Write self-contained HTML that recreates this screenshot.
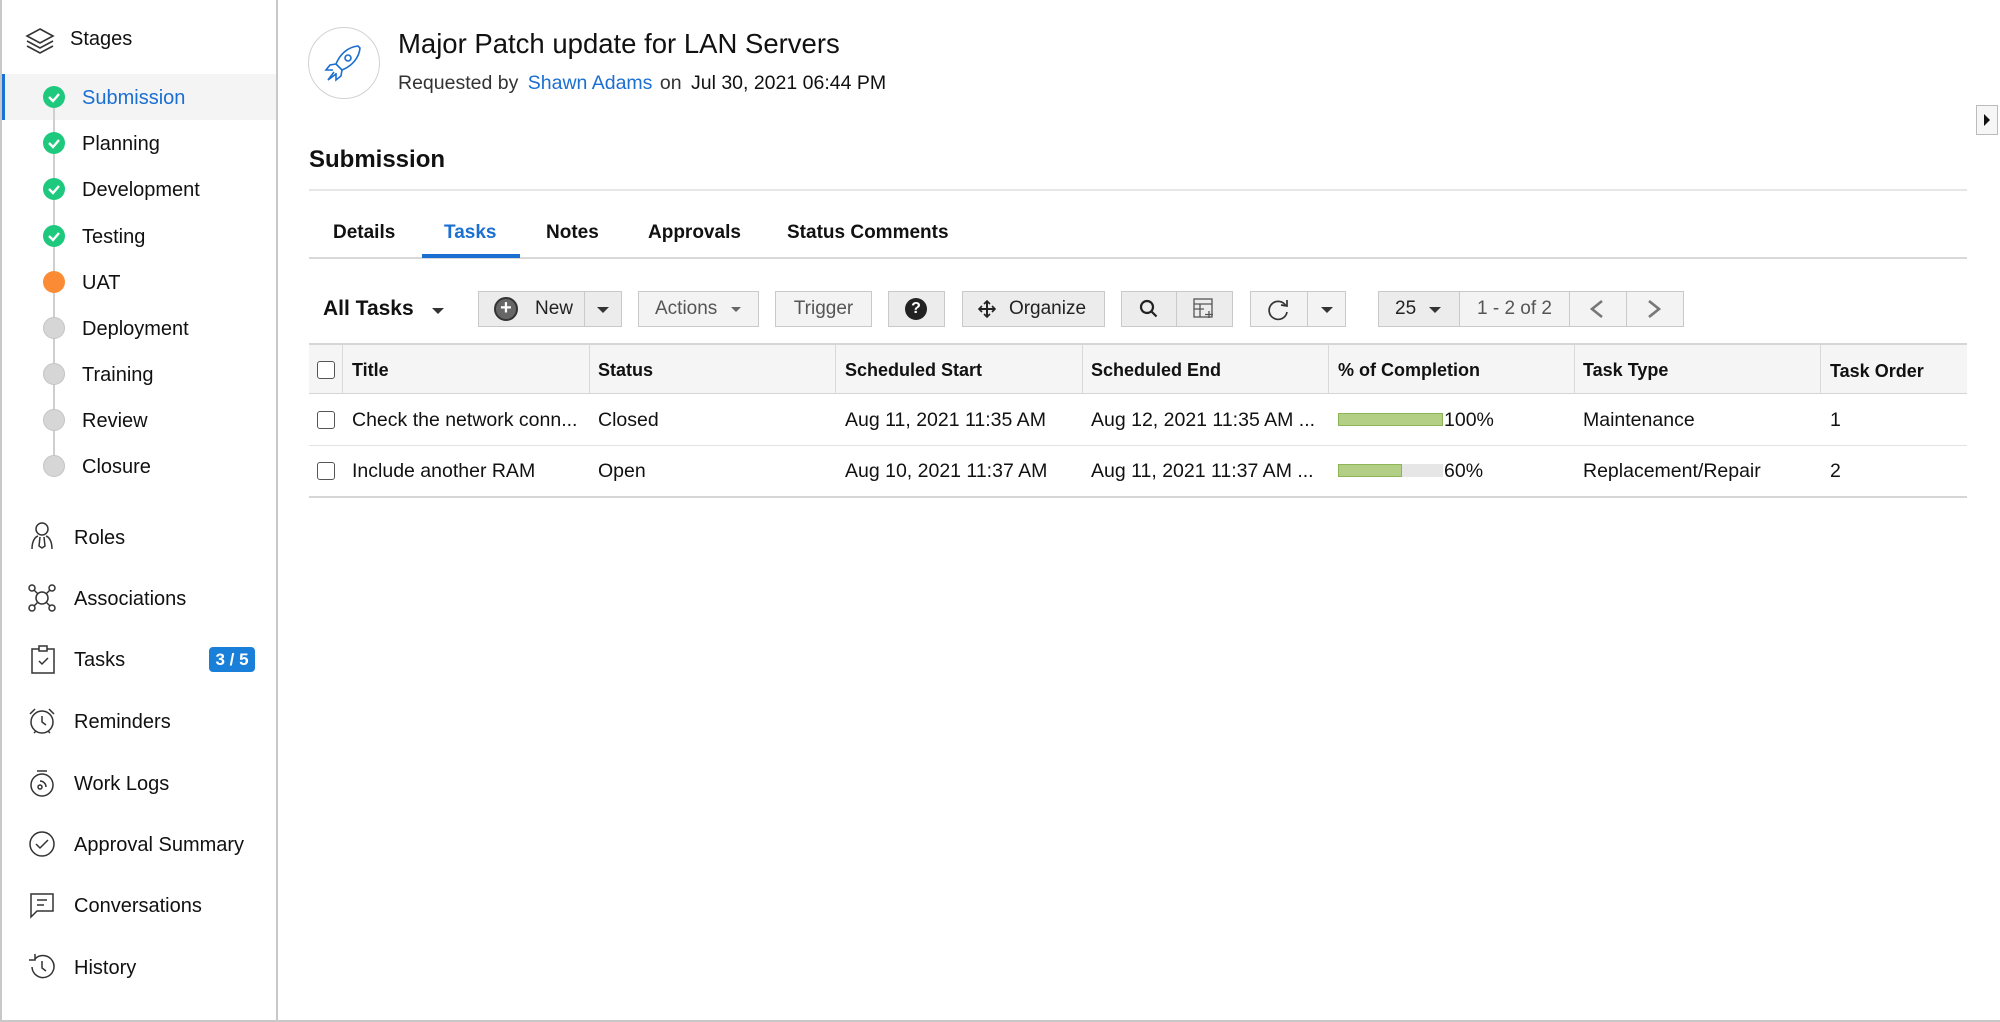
<!DOCTYPE html>
<html><head><meta charset="utf-8"><style>
*{box-sizing:border-box;margin:0;padding:0}
body{width:2000px;height:1022px;background:#fff;font-family:"Liberation Sans",Arial,sans-serif;color:#111;position:relative;overflow:hidden}
.a{position:absolute;white-space:nowrap}
.frame{position:absolute;left:0;top:0;width:2000px;height:1022px;border:2px solid #c8c8c8;border-top:none;border-right:none}
.side{position:absolute;left:0;top:0;width:278px;height:1022px;border-right:2px solid #c8c8c8}
.st{position:absolute;left:82px;font-size:20px;line-height:24px}
.dot{position:absolute;left:43px;width:22px;height:22px;border-radius:50%}
.g{background:#1ec97e}.o{background:#fb8b34}.n{background:#d6d6d6;border:1px solid #c4c4c4}
.mi{position:absolute;left:74px;font-size:20px;line-height:24px}
.tab{position:absolute;top:221px;font-size:19px;font-weight:bold;line-height:24px}
.btn{position:absolute;top:291px;height:36px;border:1px solid #c9c9c9;background:#f3f3f3;font-size:19px;line-height:34px;color:#333;text-align:center}
.th{position:absolute;top:343px;height:51px;background:#f5f5f5;border-top:2px solid #d6d6d6;border-bottom:1px solid #d6d6d6}
.hc{position:absolute;top:360px;font-size:18px;font-weight:bold}
.vl{position:absolute;top:345px;width:1px;height:49px;background:#d9d9d9}
.c{position:absolute;font-size:19.5px}
.cb{position:absolute;left:317px;width:18px;height:18px;border:1.5px solid #555;border-radius:3px;background:#fff}
.bar{position:absolute;left:1338px;width:105px;height:13px;background:#e6e6e6}
.bar i{position:absolute;left:0;top:0;height:13px;background:#b3cf86;border:1px solid #8db556}
</style></head><body>
<div class="side"></div>
<div class="frame"></div>
<svg class="a" style="left:24px;top:26px" width="32" height="28" viewBox="0 0 32 28" fill="none" stroke="#333" stroke-width="1.6"><path d="M16 3 L29 10 L16 17 L3 10 Z"/><path d="M3 15 L16 22 L29 15"/><path d="M3 20 L16 27 L29 20"/></svg>
<div class="a" style="left:70px;top:28px;font-size:20px">Stages</div>
<div class="a" style="left:2px;top:74px;width:274px;height:46px;background:#f4f4f4;border-left:3px solid #1a73d9"></div>
<div class="a" style="left:53px;top:100px;width:2px;height:366px;background:#cfcfcf"></div>
<div class="dot g" style="top:86px"></div><div class="dot g" style="top:132px"></div><div class="dot g" style="top:178px"></div><div class="dot g" style="top:225px"></div>
<div class="dot o" style="top:271px"></div><div class="dot n" style="top:317px"></div><div class="dot n" style="top:363px"></div><div class="dot n" style="top:409px"></div><div class="dot n" style="top:455px"></div>
<svg class="a" style="left:43px;top:86px" width="22" height="200"><g fill="none" stroke="#fff" stroke-width="2.4"><path d="M6 11l4 4 6-7"/><path d="M6 57l4 4 6-7"/><path d="M6 103l4 4 6-7"/><path d="M6 150l4 4 6-7"/></g></svg>
<div class="st" style="top:86px;color:#1a6fd1">Submission</div>
<div class="st" style="top:132px">Planning</div>
<div class="st" style="top:178px">Development</div>
<div class="st" style="top:225px">Testing</div>
<div class="st" style="top:271px">UAT</div>
<div class="st" style="top:317px">Deployment</div>
<div class="st" style="top:363px">Training</div>
<div class="st" style="top:409px">Review</div>
<div class="st" style="top:455px">Closure</div>
<svg class="a" style="left:28px;top:521px" width="28" height="30" fill="none" stroke="#333" stroke-width="1.5"><circle cx="14" cy="8" r="6"/><path d="M4 28c0-8 3-12 6-13M24 28c0-8-3-12-6-13M12 16l-1 9 3 2 3-2-1-9"/></svg>
<div class="mi" style="top:526px">Roles</div>
<svg class="a" style="left:28px;top:584px" width="28" height="28" fill="none" stroke="#333" stroke-width="1.5"><circle cx="4" cy="4" r="3"/><circle cx="24" cy="4" r="3"/><circle cx="4" cy="24" r="3"/><circle cx="24" cy="24" r="3"/><circle cx="14" cy="14" r="6"/><path d="M6 6l4 4M22 6l-4 4M6 22l4-4M22 22l-4-4"/></svg>
<div class="mi" style="top:587px">Associations</div>
<svg class="a" style="left:30px;top:645px" width="26" height="30" fill="none" stroke="#333" stroke-width="1.5"><rect x="2" y="4" width="22" height="24"/><rect x="9" y="1" width="8" height="5" fill="#fff"/><path d="M9 16l3 3 6-6"/></svg>
<div class="mi" style="top:648px">Tasks</div>
<div class="a" style="left:209px;top:647px;width:46px;height:25px;background:#1a7fd8;border-radius:4px;color:#fff;font-weight:bold;font-size:17px;text-align:center;line-height:25px">3 / 5</div>
<svg class="a" style="left:28px;top:707px" width="28" height="28" fill="none" stroke="#333" stroke-width="1.5"><circle cx="14" cy="15" r="11"/><path d="M14 9v6l4 3M2 7l5-5M26 7l-5-5M6 26l2-2M22 26l-2-2"/></svg>
<div class="mi" style="top:710px">Reminders</div>
<svg class="a" style="left:28px;top:769px" width="28" height="28" fill="none" stroke="#333" stroke-width="1.5"><circle cx="14" cy="16" r="11"/><path d="M9 2h10"/><circle cx="12" cy="18" r="2"/><path d="M12 12a6 6 0 0 1 6 6"/></svg>
<div class="mi" style="top:772px">Work Logs</div>
<svg class="a" style="left:28px;top:830px" width="28" height="28" fill="none" stroke="#333" stroke-width="1.5"><circle cx="14" cy="14" r="12"/><path d="M8 14l4 4 8-8"/></svg>
<div class="mi" style="top:833px">Approval Summary</div>
<svg class="a" style="left:28px;top:891px" width="28" height="28" fill="none" stroke="#333" stroke-width="1.5"><path d="M3 3h22v17H9l-6 6z"/><path d="M9 9h10M9 14h7"/></svg>
<div class="mi" style="top:894px">Conversations</div>
<svg class="a" style="left:28px;top:953px" width="28" height="28" fill="none" stroke="#333" stroke-width="1.5"><path d="M4 14a11 11 0 1 0 3-8"/><path d="M7 1v6h-6"/><path d="M14 8v7l4 3"/></svg>
<div class="mi" style="top:956px">History</div>
<div class="a" style="left:308px;top:27px;width:72px;height:72px;border:1.5px solid #d2d2d2;border-radius:50%"></div>
<svg class="a" style="left:322px;top:42px" width="44" height="44" fill="none" stroke="#1a6fd1" stroke-width="1.6"><path d="M36 4c-10 1-18 8-22 18l6 6c10-4 17-12 18-22z"/><circle cx="26" cy="16" r="3"/><path d="M14 22l-6 1-4 5 7 0M20 28l-1 6-5 4 0-7M12 30l-6 8 8-6"/></svg>
<div class="a" style="left:398px;top:28px;font-size:27.5px">Major Patch update for LAN Servers</div>
<div class="a" style="left:398px;top:72px;font-size:19.5px;color:#333">Requested by <span style="color:#1a6fd1;margin-left:4px">Shawn Adams</span> <span style="margin-left:2px">on</span> <span style="color:#111;margin-left:4px">Jul 30, 2021 06:44 PM</span></div>
<div class="a" style="left:1976px;top:105px;width:22px;height:30px;border:1px solid #bbb;background:#f6f6f6"></div>
<div class="a" style="left:1984px;top:114px;width:0;height:0;border-left:6px solid #111;border-top:6px solid transparent;border-bottom:6px solid transparent"></div>
<div class="a" style="left:309px;top:146px;font-size:24px;font-weight:bold;color:#111">Submission</div>
<div class="a" style="left:309px;top:189px;width:1658px;height:2px;background:#e6e6e6"></div>
<div class="tab" style="left:333px">Details</div>
<div class="tab" style="left:444px;color:#1a6fd1">Tasks</div>
<div class="tab" style="left:546px">Notes</div>
<div class="tab" style="left:648px">Approvals</div>
<div class="tab" style="left:787px">Status Comments</div>
<div class="a" style="left:309px;top:257px;width:1658px;height:2px;background:#d8d8d8"></div>
<div class="a" style="left:422px;top:254px;width:98px;height:4px;background:#1a6fd1"></div>
<div class="a" style="left:323px;top:297px;font-size:21px;font-weight:bold">All Tasks</div>
<div class="a" style="left:432px;top:308px;border-left:6px solid transparent;border-right:6px solid transparent;border-top:6px solid #333"></div>
<div class="btn" style="left:478px;width:107px;background:#ececec;text-align:left;padding-left:56px;color:#222">New</div>
<div class="a" style="left:494px;top:297px;width:24px;height:24px;border-radius:50%;background:#666;border:2px solid #333;color:#fff;font-size:20px;line-height:18px;text-align:center;font-weight:bold">+</div>
<div class="btn" style="left:584px;width:38px;background:#ececec"></div>
<div class="a" style="left:597px;top:307px;border-left:6px solid transparent;border-right:6px solid transparent;border-top:6px solid #333"></div>
<div class="btn" style="left:638px;width:121px;text-align:left;padding-left:16px;color:#555">Actions</div>
<div class="a" style="left:731px;top:307px;border-left:5px solid transparent;border-right:5px solid transparent;border-top:5px solid #666"></div>
<div class="btn" style="left:775px;width:97px;color:#555">Trigger</div>
<div class="btn" style="left:888px;width:57px;background:#ececec"></div>
<div class="a" style="left:905px;top:298px;width:22px;height:22px;border-radius:50%;background:#222;color:#fff;font-weight:bold;font-size:16px;line-height:22px;text-align:center">?</div>
<div class="btn" style="left:962px;width:143px;background:#ececec;color:#222;padding-left:28px">Organize</div>
<svg class="a" style="left:978px;top:300px" width="18" height="18" fill="none" stroke="#222" stroke-width="2"><path d="M9 1v16M1 9h16"/><path d="M6 4l3-3 3 3M6 14l3 3 3-3M4 6l-3 3 3 3M14 6l3 3-3 3" stroke-width="1.6"/></svg>
<div class="btn" style="left:1121px;width:56px;background:#ececec"></div>
<svg class="a" style="left:1139px;top:299px" width="20" height="20" fill="none" stroke="#222" stroke-width="2.2"><circle cx="8" cy="8" r="6"/><path d="M12.5 12.5l5 5"/></svg>
<div class="btn" style="left:1176px;width:57px;background:#ececec"></div>
<svg class="a" style="left:1193px;top:298px" width="24" height="22" fill="none" stroke="#555" stroke-width="1.3"><rect x="1" y="1" width="18" height="18"/><path d="M1 6h18M1 11h10M7 6v13M16 13v7M12 16.5h8"/></svg>
<div class="btn" style="left:1250px;width:58px;background:#f3f3f3"></div>
<svg class="a" style="left:1267px;top:298px" width="24" height="24" fill="none" stroke="#333" stroke-width="1.7"><path d="M19 8a9 9 0 1 0 1 6"/><path d="M14 7l6 1 0-6"/></svg>
<div class="btn" style="left:1307px;width:39px"></div>
<div class="a" style="left:1321px;top:307px;border-left:6px solid transparent;border-right:6px solid transparent;border-top:6px solid #333"></div>
<div class="btn" style="left:1378px;width:82px;background:#ececec;text-align:left;padding-left:16px;color:#222">25</div>
<div class="a" style="left:1429px;top:307px;border-left:6px solid transparent;border-right:6px solid transparent;border-top:6px solid #333"></div>
<div class="btn" style="left:1459px;width:111px;color:#555">1 - 2 of 2</div>
<div class="btn" style="left:1569px;width:58px"></div>
<div class="btn" style="left:1626px;width:58px"></div>
<svg class="a" style="left:1588px;top:299px" width="80" height="20" fill="none" stroke="#777" stroke-width="2.6"><path d="M14 2l-10 8 10 8M61 2l10 8-10 8"/></svg>
<div class="th" style="left:309px;width:1658px"></div>
<div class="vl" style="left:342px"></div><div class="vl" style="left:589px"></div><div class="vl" style="left:835px"></div><div class="vl" style="left:1082px"></div><div class="vl" style="left:1328px"></div><div class="vl" style="left:1574px"></div><div class="vl" style="left:1820px"></div>
<div class="cb" style="top:361px"></div>
<div class="hc" style="left:352px">Title</div>
<div class="hc" style="left:598px">Status</div>
<div class="hc" style="left:845px">Scheduled Start</div>
<div class="hc" style="left:1091px">Scheduled End</div>
<div class="hc" style="left:1338px">% of Completion</div>
<div class="hc" style="left:1583px">Task Type</div>
<div class="hc" style="left:1830px;top:361px">Task Order</div>
<div class="a" style="left:309px;top:445px;width:1658px;height:1px;background:#e3e3e3"></div>
<div class="a" style="left:309px;top:496px;width:1658px;height:2px;background:#d6d6d6"></div>
<div class="cb" style="top:411px"></div>
<div class="c" style="left:352px;top:409px">Check the network conn...</div>
<div class="c" style="left:598px;top:409px">Closed</div>
<div class="c" style="left:845px;top:409px">Aug 11, 2021 11:35 AM</div>
<div class="c" style="left:1091px;top:409px">Aug 12, 2021 11:35 AM ...</div>
<div class="bar" style="top:413px"><i style="width:105px"></i></div>
<div class="c" style="left:1444px;top:409px">100%</div>
<div class="c" style="left:1583px;top:409px">Maintenance</div>
<div class="c" style="left:1830px;top:409px">1</div>
<div class="cb" style="top:462px"></div>
<div class="c" style="left:352px;top:460px">Include another RAM</div>
<div class="c" style="left:598px;top:460px">Open</div>
<div class="c" style="left:845px;top:460px">Aug 10, 2021 11:37 AM</div>
<div class="c" style="left:1091px;top:460px">Aug 11, 2021 11:37 AM ...</div>
<div class="bar" style="top:464px"><i style="width:64px"></i></div>
<div class="c" style="left:1444px;top:460px">60%</div>
<div class="c" style="left:1583px;top:460px">Replacement/Repair</div>
<div class="c" style="left:1830px;top:460px">2</div>
</body></html>
